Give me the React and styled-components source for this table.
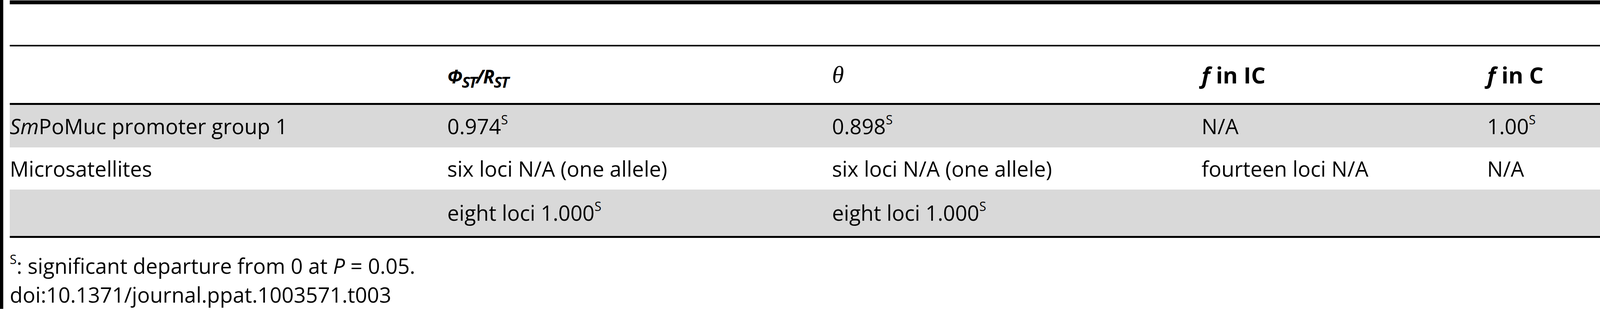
import React from 'react';
import styled, { createGlobalStyle } from 'styled-components';

const GlobalStyle = createGlobalStyle`
  html, body {
    margin: 0;
    padding: 0;
    background: #fff;
  }
  body {
    font-family: "Open Sans", "Liberation Sans", sans-serif;
    font-size: 54px;
    color: #000;
    overflow: hidden;
  }
`;

const Figure = styled.div`
  border-left: 8px solid #000;
  box-shadow: inset 1px 0 0 #b0b0b0;
  padding: 1px 0 0 17px;
`;

const Table = styled.div`
  border-top: 10px solid #000;
`;

const CaptionGap = styled.div`
  height: 104px;
  border-bottom: 4px solid #000;
`;

const Row = styled.div`
  display: grid;
  grid-template-columns: 1120px 985px 946px 731px 1fr;
  align-items: center;
  height: ${({ $h }) => $h}px;
  background: ${({ $shaded }) => ($shaded ? '#d9d9d9' : '#fff')};
  border-bottom: ${({ $rule }) => ($rule ? '5px solid #000' : 'none')};
  line-height: 1.3;
  white-space: nowrap;
`;

const HeadCell = styled.div`
  font-weight: 700;
  font-size: 58px;
`;

const Cell = styled.div``;

const Sup = styled.span`
  font-size: 32px;
  line-height: 0;
  vertical-align: 25px;
`;

const MathSym = styled.span`
  font-style: italic;
  font-size: 48px;
  letter-spacing: -2px;
`;

const Sub = styled.span`
  font-style: italic;
  font-size: 40px;
  line-height: 0;
  vertical-align: -11px;
  letter-spacing: -3px;
`;

const Theta = styled.span`
  font-family: "Liberation Serif", serif;
  font-style: italic;
  font-weight: 400;
  font-size: 62px;
`;

const Em = styled.i``;

const Notes = styled.div`
  margin-top: 34px;
  line-height: 74px;
  white-space: nowrap;
`;

const NoteLine = styled.div``;

const S = () => <Sup>S</Sup>;

export default function App() {
  return (
    <>
      <GlobalStyle />
      <Figure>
        <Table>
          <CaptionGap />
          <Row $h={145} $rule>
            <HeadCell />
            <HeadCell>
              <MathSym>Φ</MathSym>
              <Sub>ST</Sub>
              <MathSym>/R</MathSym>
              <Sub>ST</Sub>
            </HeadCell>
            <HeadCell>
              <Theta>θ</Theta>
            </HeadCell>
            <HeadCell>
              <Em>f</Em> in IC
            </HeadCell>
            <HeadCell>
              <Em>f</Em> in C
            </HeadCell>
          </Row>
          <Row $h={109} $shaded>
            <Cell>
              <Em>Sm</Em>PoMuc promoter group 1
            </Cell>
            <Cell>
              0.974<S />
            </Cell>
            <Cell>
              0.898<S />
            </Cell>
            <Cell>N/A</Cell>
            <Cell>
              1.00<S />
            </Cell>
          </Row>
          <Row $h={108}>
            <Cell>Microsatellites</Cell>
            <Cell>six loci N/A (one allele)</Cell>
            <Cell>six loci N/A (one allele)</Cell>
            <Cell>fourteen loci N/A</Cell>
            <Cell>N/A</Cell>
          </Row>
          <Row $h={119} $shaded $rule>
            <Cell />
            <Cell>
              eight loci 1.000<S />
            </Cell>
            <Cell>
              eight loci 1.000<S />
            </Cell>
            <Cell />
            <Cell />
          </Row>
        </Table>
        <Notes>
          <NoteLine>
            <S />: significant departure from 0 at <Em>P</Em> = 0.05.
          </NoteLine>
          <NoteLine>doi:10.1371/journal.ppat.1003571.t003</NoteLine>
        </Notes>
      </Figure>
    </>
  );
}
